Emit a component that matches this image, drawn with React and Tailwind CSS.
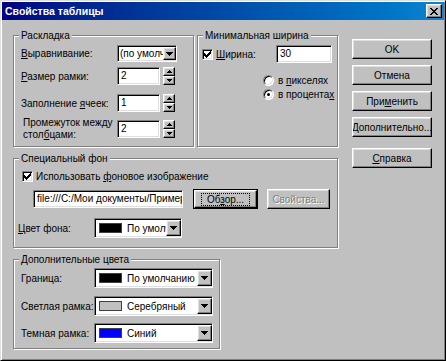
import React from 'react'

const raised = 'border border-t-white border-l-white border-b-black border-r-black shadow-[inset_-1px_-1px_0_#808080,inset_1px_1px_0_#dfdfdf] bg-[#c0c0c0]'
const sunken = 'border border-t-[#808080] border-l-[#808080] border-b-white border-r-white shadow-[inset_1px_1px_0_#000,inset_-1px_-1px_0_#dfdfdf]'

function DownArrow() {
  return (
    <svg width="7" height="4" viewBox="0 0 7 4" shapeRendering="crispEdges">
      <path d="M0 0h7v1H0z M1 1h5v1H1z M2 2h3v1H2z M3 3h1v1H3z" fill="#000" />
    </svg>
  )
}

function Tiny({ up }) {
  return (
    <svg width="5" height="3" viewBox="0 0 5 3" shapeRendering="crispEdges">
      {up
        ? <path d="M2 0h1v1H2z M1 1h3v1H1z M0 2h5v1H0z" fill="#000" />
        : <path d="M0 0h5v1H0z M1 1h3v1H1z M2 2h1v1H2z" fill="#000" />}
    </svg>
  )
}

function Group({ title, className, children }) {
  return (
    <div className={`relative border border-[#808080] shadow-[1px_1px_0_#fff,inset_1px_1px_0_#fff] ${className}`}>
      <span className="absolute -top-[7px] left-[5px] bg-[#c0c0c0] px-[2px] leading-[13px] whitespace-nowrap">{title}</span>
      {children}
    </div>
  )
}

function Check() {
  return (
    <div className={`${sunken} bg-white w-[11px] h-[11px] shrink-0 flex items-center justify-center`}>
      <svg width="7" height="7" viewBox="0 0 7 7" shapeRendering="crispEdges">
        <path d="M0 2h1v3H0z M1 3h1v3H1z M2 4h1v3H2z M3 3h1v3H3z M4 2h1v3H4z M5 1h1v3H5z M6 0h1v3H6z" fill="#000" />
      </svg>
    </div>
  )
}

function Radio({ checked }) {
  return (
    <div className="w-[11px] h-[11px] shrink-0 rounded-full bg-white border border-t-[#808080] border-l-[#808080] border-b-white border-r-white shadow-[inset_1px_1px_0_#000,inset_-1px_-1px_0_#dfdfdf] flex items-center justify-center">
      {checked && <div className="w-[3px] h-[3px] rounded-full bg-black" />}
    </div>
  )
}

function Spin({ value }) {
  return (
    <div className="flex items-center">
      <div className={`${sunken} bg-white w-[43px] h-[18px] pl-[3px] leading-[16px]`}>{value}</div>
      <div className="ml-[3px] flex flex-col">
        <div className={`${raised} w-[12px] h-[9px] flex items-center justify-center`}><Tiny up /></div>
        <div className={`${raised} w-[12px] h-[9px] flex items-center justify-center`}><Tiny /></div>
      </div>
    </div>
  )
}

function Btn({ children, className = '' }) {
  return <div className={`${raised} h-[20px] flex items-center justify-center whitespace-nowrap overflow-hidden ${className}`}>{children}</div>
}

function ColorCombo({ swatch, text, className }) {
  return (
    <div className={`${sunken} bg-white h-[20px] flex items-center ${className}`}>
      <div className={`ml-[4px] w-[23px] h-[10px] shrink-0 border border-[#404040] ${swatch}`} />
      <span className="ml-[5px] flex-1 whitespace-nowrap overflow-hidden">{text}</span>
      <div className={`${raised} w-[15px] h-[16px] shrink-0 flex items-center justify-center`}><DownArrow /></div>
    </div>
  )
}

export default function App() {
  return (
    <div className="w-[446px] h-[361px] bg-[#c0c0c0] border border-t-[#dfdfdf] border-l-[#dfdfdf] border-b-black border-r-black shadow-[inset_1px_1px_0_#fff,inset_-1px_-1px_0_#808080] p-[1px] font-['Liberation_Sans',Arial,sans-serif] text-[10px] leading-[13px] text-black flex flex-col">
      {/* title bar */}
      <div className="h-[18px] bg-linear-to-r from-[#000080] to-[#1084d0] flex items-center pl-[3px] pr-[2px]">
        <span className="text-white font-bold text-[10.5px]">Свойства таблицы</span>
        <div className={`${raised} ml-auto w-[16px] h-[14px] flex items-center justify-center`}>
          <svg width="8" height="7" viewBox="0 0 8 7" shapeRendering="crispEdges">
            <path d="M0 0h2v1H0z M6 0h2v1H6z M1 1h2v1H1z M5 1h2v1H5z M2 2h4v1H2z M3 3h2v1H3z M2 4h4v1H2z M1 5h2v1H1z M5 5h2v1H5z M0 6h2v1H0z M6 6h2v1H6z" fill="#000" />
          </svg>
        </div>
      </div>

      <div className="flex items-start pl-[11px] pt-[15px]">
        {/* left column */}
        <div className="w-[325px] flex flex-col">
          <div className="flex gap-[3px]">
            <Group title="Раскладка" className="w-[181px] h-[112px]">
              <div className="flex flex-col pl-[7px] pt-[9px]">
                <div className="flex items-center h-[17px]">
                  <span className="w-[96px] whitespace-nowrap"><u>В</u>ыравнивание:</span>
                  <div className={`${sunken} bg-white w-[60px] h-[17px] flex items-center`}>
                    <span className="pl-[2px] flex-1 whitespace-nowrap overflow-hidden">(по умолчанию)</span>
                    <div className={`${raised} w-[13px] h-[13px] shrink-0 flex items-center justify-center`}><DownArrow /></div>
                  </div>
                </div>
                <div className="flex items-center h-[18px] mt-[5px]">
                  <span className="w-[96px] whitespace-nowrap"><u>Р</u>азмер рамки:</span>
                  <Spin value="2" />
                </div>
                <div className="flex items-center h-[18px] mt-[9px]">
                  <span className="w-[96px] whitespace-nowrap">Заполнение <u>я</u>чеек:</span>
                  <Spin value="1" />
                </div>
                <div className="flex items-center h-[18px] mt-[8px]">
                  <span className="w-[96px] pl-[2px] leading-[12px] whitespace-nowrap">Промежуток между<br />стол<u>б</u>цами:</span>
                  <Spin value="2" />
                </div>
              </div>
            </Group>

            <Group title="Минимальная ширина" className="w-[141px] h-[112px]">
              <div className="flex flex-col pt-[9px] pr-[5px]">
                <div className="flex items-center h-[18px] pl-[4px]">
                  <Check />
                  <span className="ml-[3px]"><u>Ш</u>ирина:</span>
                  <div className={`${sunken} bg-white ml-auto w-[56px] h-[18px] pl-[3px] leading-[16px]`}>30</div>
                </div>
                <div className="flex items-center h-[12px] mt-[11px] pl-[65px]">
                  <Radio />
                  <span className="ml-[4px] whitespace-nowrap">в <u>п</u>икселях</span>
                </div>
                <div className="flex items-center h-[12px] mt-[2px] pl-[65px]">
                  <Radio checked />
                  <span className="ml-[4px] whitespace-nowrap">в процента<u>х</u></span>
                </div>
              </div>
            </Group>
          </div>

          <Group title="Специальный фон" className="w-[325px] h-[90px] mt-[11px]">
            <div className="flex flex-col pt-[12px]">
              <div className="flex items-center h-[11px] pl-[8px]">
                <Check />
                <span className="ml-[3px] whitespace-nowrap">Использовать <u>ф</u>оновое изображение</span>
              </div>
              <div className="flex items-center h-[20px] mt-[7px] pl-[19px]">
                <div className={`${sunken} bg-white w-[150px] h-[18px] pl-[3px] leading-[16px] whitespace-nowrap overflow-hidden`}>file:///C:/Мои документы/Примеры/фон.gif</div>
                <div className="ml-[10px] w-[65px] h-[20px] border border-black">
                  <div className={`${raised} w-full h-full flex items-center justify-center`}>
                    <span className="border border-dotted border-black px-[5px] leading-[11px] whitespace-nowrap">Об<u>з</u>ор...</span>
                  </div>
                </div>
                <Btn className="ml-[9px] w-[63px]">
                  <span className="text-[#808080] [text-shadow:1px_1px_0_#fff]">Свойства...</span>
                </Btn>
              </div>
              <div className="flex items-center h-[20px] mt-[9px] pl-[4px]">
                <span className="w-[76px] whitespace-nowrap"><u>Ц</u>вет фона:</span>
                <ColorCombo swatch="bg-black" text="По умолчанию" className="w-[88px]" />
              </div>
            </div>
          </Group>

          <Group title="Дополнительные цвета" className="w-[207px] h-[90px] mt-[11px]">
            <div className="flex flex-col pt-[8px] pl-[7px]">
              <div className="flex items-center h-[20px]">
                <span className="w-[73px] whitespace-nowrap">Граница:</span>
                <ColorCombo swatch="bg-black" text="По умолчанию" className="w-[119px]" />
              </div>
              <div className="flex items-center h-[20px] mt-[8px]">
                <span className="w-[73px] whitespace-nowrap">Светлая рамка:</span>
                <ColorCombo swatch="bg-[#c0c0c0]" text="Серебряный" className="w-[119px]" />
              </div>
              <div className="flex items-center h-[20px] mt-[7px]">
                <span className="w-[73px] whitespace-nowrap">Темная рамка:</span>
                <ColorCombo swatch="bg-[#0000ff]" text="Синий" className="w-[119px]" />
              </div>
            </div>
          </Group>
        </div>

        {/* right column */}
        <div className="ml-[14px] mt-[4px] w-[80px] flex flex-col">
          <Btn>OK</Btn>
          <Btn className="mt-[6px]">Отмена</Btn>
          <Btn className="mt-[6px]">При<u>м</u>енить</Btn>
          <Btn className="mt-[6px]"><u>Д</u>ополнительно...</Btn>
          <Btn className="mt-[11px]"><u>С</u>правка</Btn>
        </div>
      </div>
    </div>
  )
}
